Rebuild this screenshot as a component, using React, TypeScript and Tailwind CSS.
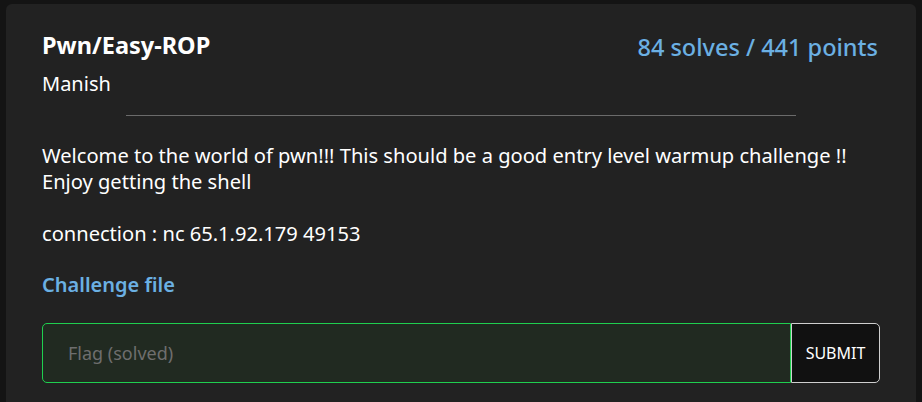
import React from "react";

const font = { fontFamily: '"Noto Sans", "Open Sans", sans-serif' };

export default function App() {
  return (
    <div
      className="h-[402px] w-full overflow-hidden bg-[#141414] pt-[4px] pl-[6px] pr-[6px]"
      style={font}
    >
      <div className="h-[420px] rounded-[6px] bg-[#222222] px-[36px] pt-[25px] text-white">
        <div className="flex items-start justify-between">
          <div>
            <h2 className="text-[23.5px] font-bold leading-[32px]">Pwn/Easy-ROP</h2>
            <p className="mt-[10px] text-[20px] leading-[26px]">Manish</p>
          </div>
          <div className="pt-[4px] pr-[2px] text-[23.5px] font-medium leading-[28px] text-[#6bb0e3]">
            84 solves / 441 points
          </div>
        </div>
        <hr className="mx-auto mt-[18px] w-[80%] border-t border-[#6b6b6b]" />
        <div className="mt-[27px] text-[20.1px] leading-[26px]">
          <p>
            Welcome to the world of pwn!!! This should be a good entry level warmup
            challenge !!
            <br />
            Enjoy getting the shell
          </p>
          <p className="mt-[26px]">connection : nc 65.1.92.179 49153</p>
        </div>
        <a
          href="#"
          className="mt-[25px] block text-[20px] font-semibold leading-[26px] text-[#6bb0e3]"
        >
          Challenge file
        </a>
        <form className="mt-[25px] flex h-[60px]" onSubmit={(e) => e.preventDefault()}>
          <input
            disabled
            placeholder="Flag (solved)"
            className="h-full flex-1 rounded-l-[5px] border border-[#1fcf4f] bg-[#212a21] px-[25px] text-[18px] text-white placeholder:text-[#6e6e6e]"
            style={font}
          />
          <button
            type="submit"
            className="h-full w-[89px] rounded-r-[5px] border border-[#cfcfcf] bg-[#111111] text-[16px] uppercase text-white"
            style={font}
          >
            Submit
          </button>
        </form>
      </div>
    </div>
  );
}
